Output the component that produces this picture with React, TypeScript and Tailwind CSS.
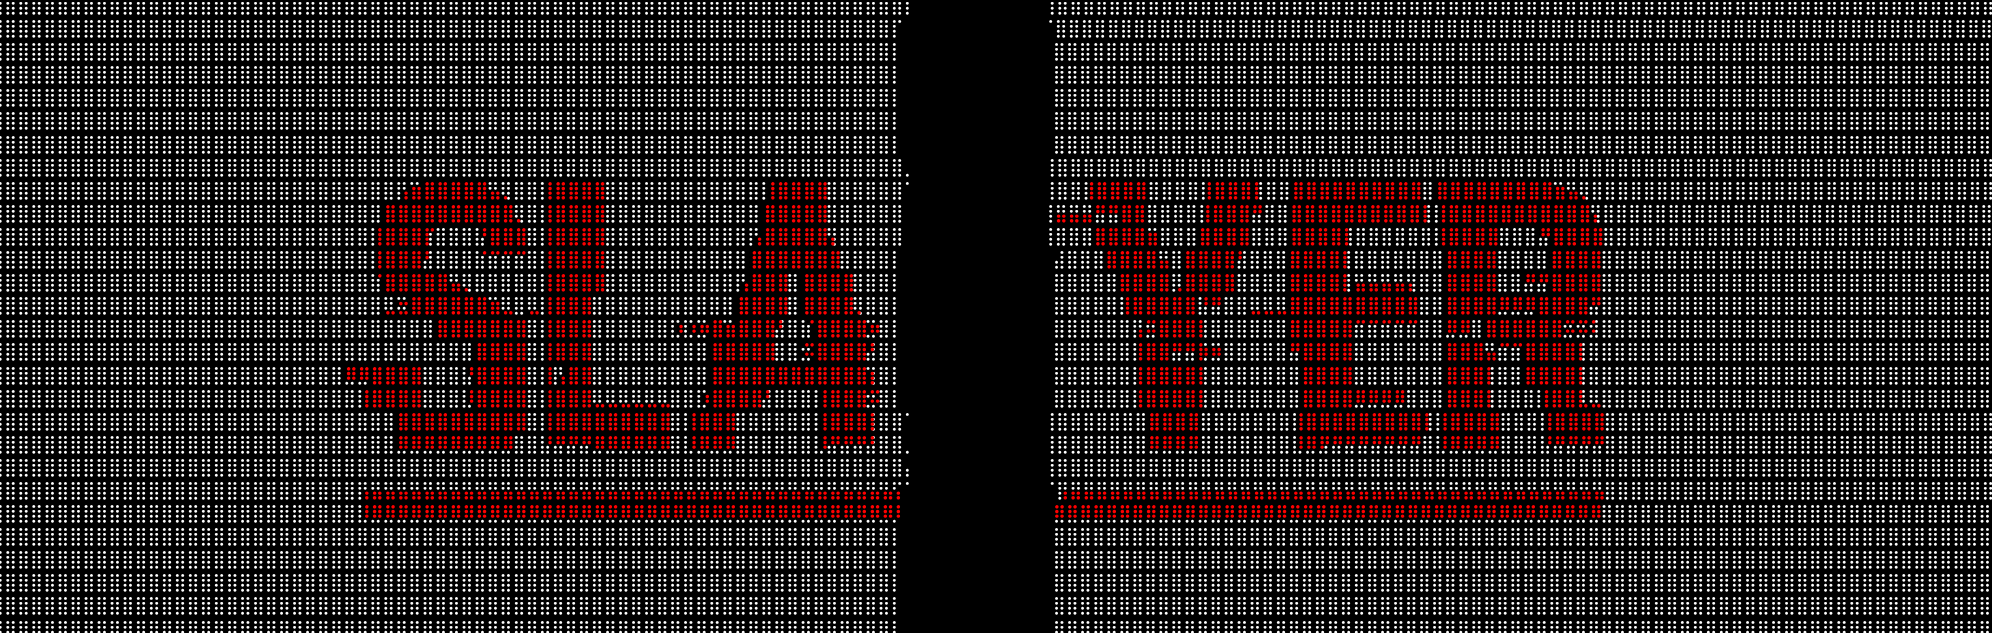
const CELL = 13.045;
const LEFT0 = -8.75;
const A = 1057.3;
const B = 1055.7;
const C = 1054;
const LEFT_CELLS = 71;
const RIGHT_CELLS = 74;
const LINES = 28;

type Range = [number, number, number];
const K = (a: number, b: number, m = 15): Range => [
  8.3 + CELL * Math.floor(a) + (a % 1 ? 5 : 0),
  8.3 + CELL * Math.floor(b) + (b % 1 ? 5 : 0),
  m,
];
const Z8 = (a: number, b: number, m = 15): Range => [1029 + a / 3, 1029 + b / 3, m];
const Z9 = (a: number, b: number, m = 15): Range => [1309 + a / 3, 1309 + b / 3, m];

const RED: Record<number, Range[]> = {
  8: [K(30.5, 30.5, 12), K(31, 31.5, 14), K(32, 36.5), K(37, 37.5, 12), K(38, 38, 8), K(41.5, 45.5), K(58.5, 62.5),
    Z8(172, 335), Z8(528, 680), Z8(785, 870), Z9(0, 325), Z9(380, 710), Z9(730, 755, 14), Z9(770, 790, 12), Z9(810, 815, 8)],
  9: [K(29, 38.5), K(39, 39, 8), K(41.5, 45.5), K(58, 62.5),
    Z8(75, 180, 12), Z8(195, 255, 3), Z8(270, 335), Z8(525, 650), Z8(665, 680, 3), Z8(780, 870), Z9(0, 330), Z9(340, 340), Z9(385, 830), Z9(845, 850, 12)],
  10: [K(28.5, 28.5), K(29, 32), K(32.5, 32.5, 1), K(36.5, 36.5, 3), K(37, 39.5), K(41.5, 45.5), K(57.5, 57.5, 12), K(58, 62.5), K(63, 63, 12),
    Z8(195, 335), Z8(350, 370, 14), Z8(505, 650), Z8(780, 870), Z9(0, 80), Z9(100, 100), Z9(385, 550), Z9(690, 700, 3), Z9(725, 865)],
  11: [K(28.5, 28.5), K(29, 31.5), K(32, 32, 3), K(36.5, 36.5, 1), K(37, 39.5, 1), K(41.5, 45.5), K(57, 63.5),
    Z8(230, 365), Z8(385, 400, 12), Z8(470, 605), Z8(620, 630, 3), Z8(780, 870), Z9(15, 100), Z9(405, 550), Z9(720, 860)],
  12: [K(28.5, 28.5, 1), K(29, 33.5), K(34, 34.5, 12), K(35, 35, 8), K(41.5, 45.5), K(56.5, 56.5, 12), K(57, 59.5), K(61, 64.5),
    Z8(270, 410), Z8(445, 445, 8), Z8(465, 600), Z8(780, 870), Z9(15, 105), Z9(130, 300, 12), Z9(405, 550), Z9(640, 705, 3), Z9(720, 860)],
  13: [K(29, 29.5, 8), K(30, 30.5, 10), K(31, 36.5), K(37, 37.5, 14), K(38, 38.5, 8), K(40, 40.5, 8), K(41.5, 44.5), K(56, 59.5), K(61, 64.5), K(65, 65, 8),
    Z8(285, 500), Z8(510, 565, 3), Z8(660, 770, 8), Z8(780, 870), Z9(15, 310), Z9(405, 550), Z9(560, 665, 7), Z9(680, 830), Z9(840, 860, 3)],
  14: [K(33, 39.5), K(41.5, 44.5), K(51.5, 51.5, 6), K(52.5, 52.5, 6), K(53, 53.5, 6), K(54, 54.5), K(55, 55.5, 14), K(56, 58.5), K(59, 59, 3), K(61.5, 61.5, 1), K(62, 64.5), K(65, 65.5), K(66, 66.5, 6),
    Z8(325, 325, 12), Z8(345, 365, 5), Z8(385, 490), Z8(505, 505), Z8(780, 870), Z9(15, 115), Z9(130, 310, 1), Z9(405, 470, 7), Z9(520, 745), Z9(760, 850, 5)],
  15: [K(36, 39.5), K(41.5, 44.5), K(54, 58.5), K(61, 61.5, 5), K(62, 65.5), K(66, 66, 3),
    Z8(325, 325), Z8(345, 410), Z8(425, 490, 3), Z8(505, 505), Z8(505, 560, 6), Z8(780, 795, 3), Z8(815, 870), Z9(15, 115), Z9(130, 130), Z9(405, 500), Z9(530, 545, 12), Z9(560, 625, 1), Z9(640, 810), Z9(845, 845)],
  16: [K(26, 27.5, 7), K(28, 31.5), K(35.5, 35.5, 3), K(36, 39.5), K(41.5, 41.5), K(42.5, 42.5, 12), K(43, 44.5), K(54, 65.5), K(66, 66, 14),
    Z8(325, 325), Z8(345, 490), Z8(505, 505), Z8(815, 870), Z9(15, 115), Z9(130, 130), Z9(405, 500), Z9(525, 525), Z9(640, 810), Z9(845, 845)],
  17: [K(27.5, 27.5), K(28, 31.5), K(35.5, 35.5, 7), K(36, 39.5), K(41.5, 44.5), K(45, 50.5, 8), K(53.5, 53.5, 6), K(54, 57.5), K(58, 58, 3), K(62.5, 62.5), K(63, 65.5), K(66, 66.5, 5),
    Z8(325, 325), Z8(345, 490), Z8(505, 505), Z8(815, 870), Z9(15, 115), Z9(130, 270, 7), Z9(405, 500), Z9(525, 525), Z9(700, 700), Z9(720, 810), Z9(800, 860, 8)],
  18: [K(30, 39.5), K(41.5, 50.5), K(52.5, 52.5), K(53, 55.5), K(62.5, 62.5), K(63, 65.5), K(66, 66),
    Z8(355, 495), Z8(800, 800), Z8(825, 870), Z9(0, 325), Z9(340, 340), Z9(390, 550), Z9(705, 870)],
  19: [K(30, 38.5, 7), K(41.5, 41.5, 3), K(42, 44.5, 3), K(45, 50.5, 7), K(52.5, 52.5, 7), K(53, 55.5, 7), K(62.5, 62.5, 7), K(63, 65.5, 3), K(66, 66, 3),
    Z8(355, 495, 7), Z8(800, 800, 7), Z8(825, 870, 7), Z9(0, 30, 7), Z9(40, 325, 3), Z9(390, 550, 7), Z9(705, 870, 3)],
  21: [K(27.5, 68, 12), Z8(95, 870, 12), Z9(0, 870, 12)],
  22: [K(27.5, 68, 7), Z8(70, 870, 7), Z9(0, 870, 7)],
};

const leftEnd = (i: number): [number, number, number] => {
  const t: Record<number, [number, number, number]> = {
    0: [15, 15, 15], 1: [15, 1, 0], 7: [15, 15, 8], 8: [15, 15, 1], 9: [15, 15, 0], 10: [15, 15, 0],
    18: [15, 15, 1], 19: [15, 15, 8], 20: [15, 15, 12], 21: [15, 1, 1],
  };
  return t[i] ?? [15, 0, 0];
};
const rightStart = (i: number): [number, number] => {
  const t: Record<number, [number, number]> = {
    0: [A, 15], 1: [B, 1], 7: [A, 15], 8: [A, 15], 9: [B, 15], 10: [B, 15], 18: [A, 15], 19: [A, 15], 20: [A, 15], 21: [A, 1],
  };
  return t[i] ?? [C, 0];
};

const BITS = [[0x01, 0x02, 0x04, 0x40], [0x08, 0x10, 0x20, 0x80]];

function layers(line: number, start: number, n: number, present: (j: number, col: number) => number) {
  const ranges = RED[line] ?? [];
  let white = "";
  let red = "";
  for (let j = 0; j < n; j++) {
    let w = 0;
    let r = 0;
    for (let col = 0; col < 2; col++) {
      const x = start + j * CELL + 6.52 + (col ? 2.5 : -2.5);
      const mask = present(j, col);
      for (let row = 0; row < 4; row++) {
        if (!(mask & (1 << row))) continue;
        const hit = ranges.some(([a, b, m]) => x >= a - 1.5 && x <= b + 1.5 && m & (1 << row));
        if (hit) r |= BITS[col][row];
        else w |= BITS[col][row];
      }
    }
    white += String.fromCharCode(0x2800 + w);
    red += String.fromCharCode(0x2800 + r);
  }
  return { white, red };
}

function Seg({ white, red, ml }: { white: string; red: string; ml?: number }) {
  return (
    <div className="grid shrink-0" style={ml === undefined ? undefined : { marginLeft: ml }}>
      <span className="[grid-area:1/1] text-white">{white}</span>
      <span className="[grid-area:1/1] -ml-[0.4px] text-[#ff0000] font-bold tracking-[-0.81px]">{red}</span>
    </div>
  );
}

function Line({ i }: { i: number }) {
  const [l68, r68, l69] = leftEnd(i);
  const left = layers(i, LEFT0, LEFT_CELLS, (j, col) => {
    const k = j - 1;
    if (k < 68) return 15;
    if (k === 68) return col ? r68 : l68;
    return col ? 0 : l69;
  });
  const [pair, lone] = rightStart(i);
  const rs = pair - 4.02 - CELL;
  const right = layers(i, rs, RIGHT_CELLS, (j, col) => {
    if (j === 0) return col ? lone : 0;
    if (j === 1 && col === 0 && i === 11) return 12;
    return 15;
  });
  return (
    <div className="flex h-[23.1px]">
      <Seg {...left} />
      <Seg {...right} ml={rs - (LEFT0 + LEFT_CELLS * CELL)} />
    </div>
  );
}

export default function App() {
  return (
    <div className="h-[633px] w-[1992px] overflow-hidden bg-black">
      <div className="-mt-[7px] -ml-[8.75px] font-['DejaVu_Serif',serif] text-[17.81px] leading-[23.1px] whitespace-pre [will-change:transform]">
        {Array.from({ length: LINES }, (_, i) => (
          <Line key={i} i={i} />
        ))}
      </div>
    </div>
  );
}
